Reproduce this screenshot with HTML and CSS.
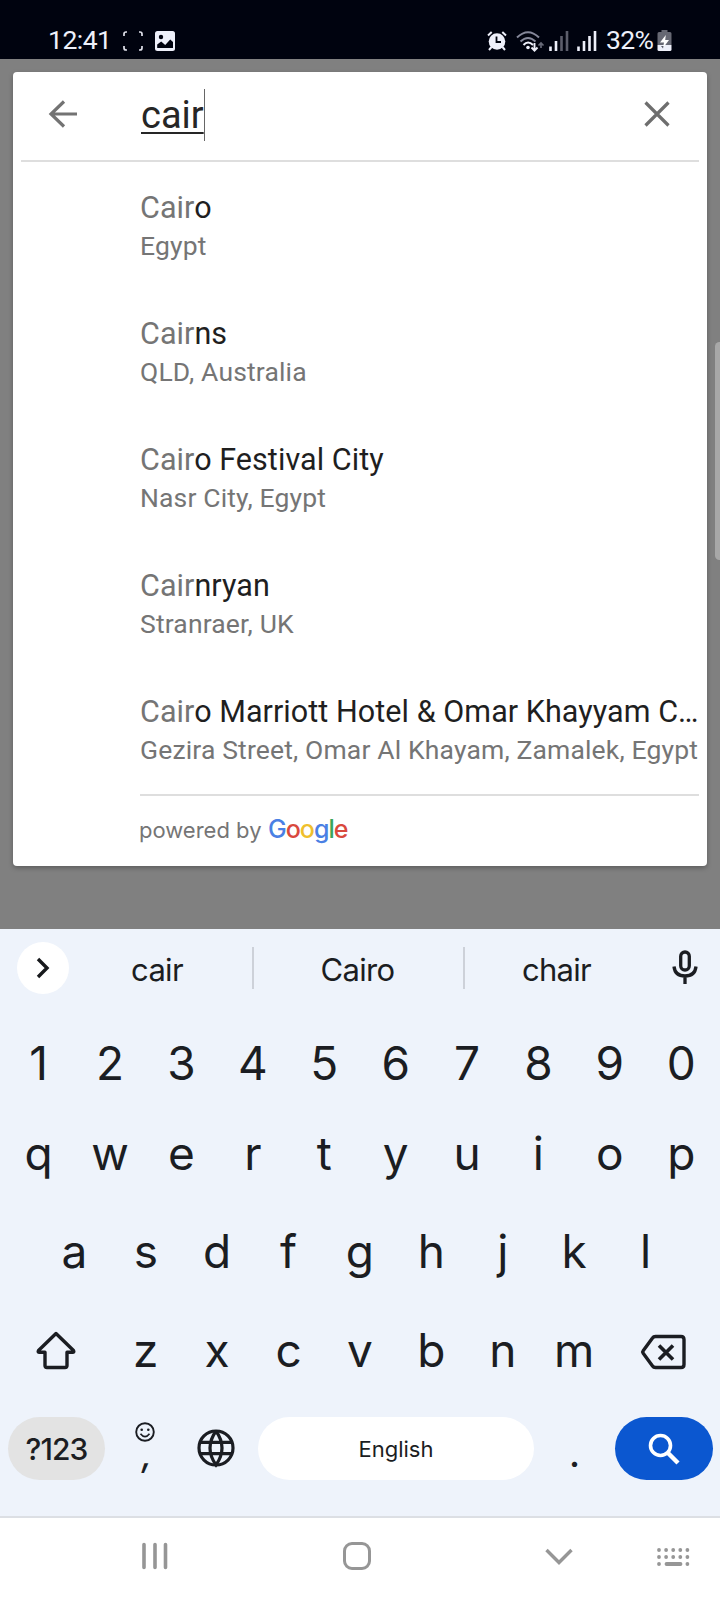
FILE: index.html
```html
<!DOCTYPE html>
<html lang="en">
<head>
<meta charset="utf-8">
<title>Place search</title>
<link rel="stylesheet" href="styles.css">
</head>
<body>
<div class="phone">
  <header class="status">
    <span class="time">12:41</span>
    <svg class="ic-capture" width="20" height="20" viewBox="0 0 20 20"><path d="M1 5V3q0-2 2-2h1M16 1h1q2 0 2 2v2M19 15v2q0 2-2 2h-1M4 19H3q-2 0-2-2v-2" fill="none" stroke="#dfe1ea" stroke-width="1.7"/></svg>
    <svg class="ic-picture" width="20" height="20" viewBox="0 0 20 20"><rect width="20" height="20" rx="2.5" fill="#eef0fa"/><circle cx="6" cy="6" r="2.2" fill="#00030f"/><path d="M2.2 17v-3.500l4-3 4 3.400 5-5.500 2.800 2.600v6z" fill="#00030f"/></svg>
    <svg class="ic-alarm" width="20" height="20" viewBox="0 0 20 20"><circle cx="10" cy="10.500" r="8.300" fill="#eef0fa"/><path d="M1 4.500 4.700 1M19 4.500 15.300 1M4.500 16 2 19M15.500 16l2.500 3" stroke="#eef0fa" stroke-width="2"/><path d="M9.500 5.500v5.500h4.500" fill="none" stroke="#00030f" stroke-width="1.800"/></svg>
    <svg class="ic-wifi" width="28" height="22" viewBox="0 0 28 22"><g fill="none" stroke-width="2"><path d="M1 6.500Q12 -4 23 6.500" stroke="#85889a"/><path d="M4.500 10.500Q12 3.500 19.500 10.500" stroke="#85889a"/><path d="M7.500 14Q12 9 17 14" stroke="#eef0fa"/></g><circle cx="12" cy="16.500" r="1.800" fill="#eef0fa"/><path d="M18.500 12v7M15.500 16.500l3 3.200 3-3.200" fill="none" stroke="#eef0fa" stroke-width="1.900"/><path d="M25 17v-4.500M22.500 14.500l2.500-2.500 2.500 2.500" fill="none" stroke="#666977" stroke-width="1.700"/></svg>
    <svg class="ic-signal" width="20" height="20" viewBox="0 0 20 20"><path d="M1.500 15.500V20M7 10v10" stroke="#eef0fa" stroke-width="2.600"/><path d="M12.500 5v15M18 0v20" stroke="#5c5e6b" stroke-width="2.600"/></svg>
    <svg class="ic-signal" width="20" height="20" viewBox="0 0 20 20"><path d="M1.500 15.500V20M7 10v10M12.500 5v15M18 0v20" stroke="#eef0fa" stroke-width="2.600"/></svg>
    <span class="percent">32%</span>
    <svg class="ic-battery" width="15" height="22" viewBox="0 0 15 22"><path d="M4.500 0h6v2H13q1.500 0 1.500 1.500V15H.5V3.500Q.5 2 2 2h2.500z" fill="#666873"/><path d="M.5 15h14v4.500q0 1.500-1.500 1.500H2Q.5 21 .5 19.500z" fill="#eef0fa"/><path d="M8.800 5 3 12.500h4L6 18l6-8H8.200z" fill="#fff"/><path d="M4 16h2.500L6 18.500z" fill="#555866"/></svg>
  </header>

  <main class="backdrop">
    <section class="card">
      <div class="search">
        <svg class="back" width="30" height="28" viewBox="0 0 30 28"><path d="M15 1.500 2 14l13 12.500M2 14h26" fill="none" stroke="#737373" stroke-width="3.200"/></svg>
        <div class="query"><span>cair</span></div>
        <svg class="clear" width="26" height="26" viewBox="0 0 26 26"><path d="M1.500 1.500l23 23M24.500 1.500l-23 23" stroke="#6e6e6e" stroke-width="3.200"/></svg>
      </div>
      <ul class="results">
        <li><p class="place"><b>Cair</b>o</p><p class="region">Egypt</p></li>
        <li><p class="place"><b>Cair</b>ns</p><p class="region">QLD, Australia</p></li>
        <li><p class="place"><b>Cair</b>o Festival City</p><p class="region">Nasr City, Egypt</p></li>
        <li><p class="place"><b>Cair</b>nryan</p><p class="region">Stranraer, UK</p></li>
        <li><p class="place"><b>Cair</b>o Marriott Hotel &amp; Omar Khayyam C…</p><p class="region">Gezira Street, Omar Al Khayam, Zamalek, Egypt</p></li>
      </ul>
      <div class="credit"><span class="by">powered by</span><span class="brand"><i class="bl">G</i><i class="re">o</i><i class="ye">o</i><i class="bl">g</i><i class="gr">l</i><i class="re">e</i></span></div>
    </section>
    <div class="scroll-thumb"></div>
  </main>

  <section class="keyboard">
    <div class="suggest">
      <span class="expand"><svg width="14" height="22" viewBox="0 0 14 22"><path d="M2 2l9 9-9 9" fill="none" stroke="#17191c" stroke-width="3.400"/></svg></span>
      <span class="word first">cair</span><span class="bar"></span>
      <span class="word">Cairo</span><span class="bar"></span>
      <span class="word last">chair</span>
      <svg class="mic" width="26" height="34" viewBox="0 0 26 34"><g fill="none" stroke="#1b1d22" stroke-width="3.300"><rect x="8.700" y="1" width="8.600" height="18" rx="4.300"/><path d="M2 15.500Q3 25 13 25t11-9.500M13 25v8"/></g></svg>
    </div>
    <div class="row digits"><kbd>1</kbd><kbd>2</kbd><kbd>3</kbd><kbd>4</kbd><kbd>5</kbd><kbd>6</kbd><kbd>7</kbd><kbd>8</kbd><kbd>9</kbd><kbd>0</kbd></div>
    <div class="row top"><kbd>q</kbd><kbd>w</kbd><kbd>e</kbd><kbd>r</kbd><kbd>t</kbd><kbd>y</kbd><kbd>u</kbd><kbd>i</kbd><kbd>o</kbd><kbd>p</kbd></div>
    <div class="row home"><kbd>a</kbd><kbd>s</kbd><kbd>d</kbd><kbd>f</kbd><kbd>g</kbd><kbd>h</kbd><kbd>j</kbd><kbd>k</kbd><kbd>l</kbd></div>
    <div class="row low">
      <span class="wide"><svg class="shift" width="40" height="40" viewBox="0 0 40 40"><path d="M20 2.500 37.500 19.500q1 1.800-1 1.800h-5.500V34.500q0 2-2 2H11q-2 0-2-2V21.300H3.500q-2 0-1-1.800z" fill="none" stroke="#1b1d22" stroke-width="3.400" stroke-linejoin="round"/></svg></span>
      <kbd>z</kbd><kbd>x</kbd><kbd>c</kbd><kbd>v</kbd><kbd>b</kbd><kbd>n</kbd><kbd>m</kbd>
      <span class="wide"><svg class="erase" width="46" height="36" viewBox="0 0 46 36"><path d="M15.500 2.500H41q3 0 3 3v25q0 3-3 3H15.500q-2 0-3-1.500L3 19q-.8-1 0-2L12.500 4q1-1.500 3-1.500z" fill="none" stroke="#1b1d22" stroke-width="3.400"/><path d="M19 11.500 33 25.500M33 11.500 19 25.500" stroke="#1b1d22" stroke-width="3.600"/></svg></span>
    </div>
    <div class="actions">
      <span class="symbols">?123</span>
      <span class="comma"><svg width="20" height="20" viewBox="0 0 20 20"><circle cx="10" cy="10" r="8.800" fill="none" stroke="#1b1d22" stroke-width="1.900"/><circle cx="6.700" cy="7.700" r="1.300" fill="#1b1d22"/><circle cx="13.300" cy="7.700" r="1.300" fill="#1b1d22"/><path d="M5.500 11.700Q10 17.500 14.500 11.700" fill="none" stroke="#1b1d22" stroke-width="1.700"/></svg><em>,</em></span>
      <svg class="globe" width="38" height="38" viewBox="0 0 38 38"><g fill="none" stroke="#1b1d22" stroke-width="3.200"><circle cx="19" cy="19" r="17"/><path d="M19 2Q7 19 19 36Q31 19 19 2M3.500 13.300h31M3.500 24.700h31"/></g></svg>
      <span class="space">English</span>
      <span class="dot">.</span>
      <span class="go"><svg width="32" height="32" viewBox="0 0 32 32"><circle cx="12.500" cy="12.500" r="10" fill="none" stroke="#fff" stroke-width="3.600"/><path d="M19.500 19.500 30 30" stroke="#fff" stroke-width="4.400"/></svg></span>
    </div>
  </section>

  <nav class="nav">
    <svg width="26" height="28" viewBox="0 0 26 28"><path d="M2 2.500v23M13 2.500v23M23.500 2.500v23" stroke="#969696" stroke-width="3.600" stroke-linecap="round"/></svg>
    <svg width="28" height="28" viewBox="0 0 28 28"><rect x="1.500" y="1.500" width="25" height="25" rx="7.500" fill="none" stroke="#969696" stroke-width="3"/></svg>
    <svg width="28" height="18" viewBox="0 0 28 18"><path d="M1.500 3 14 15.500 26.500 3" fill="none" stroke="#969696" stroke-width="3.400"/></svg>
    <svg width="34" height="20" viewBox="0 0 34 20"><g fill="none" stroke="#969696" stroke-width="3.800" stroke-linecap="round"><path d="M3 4h29" stroke-dasharray="0 7.100"/><path d="M3 11h29" stroke-dasharray="0 7.100"/><path d="M3 18h0M10.500 18h14M31.400 18h0"/></g></svg>
  </nav>
</div>
</body>
</html>
```
FILE: styles.css
```css
* { box-sizing: border-box; }
body { margin: 0; }
svg { display: block; flex: none; overflow: visible; }
.phone {
  width: 720px;
  height: 1600px;
  display: flex;
  flex-direction: column;
  overflow: hidden;
  background: #fff;
  font-family: Roboto, "Liberation Sans", sans-serif;
}

.status {
  height: 59px;
  flex: none;
  display: flex;
  align-items: flex-start;
  padding: 30px 0 0 48px;
  background: #00030f;
  color: #eef0fa;
  font-size: 26.500px;
  line-height: 20px;
}
.time { width: 75px; letter-spacing: -0.5px; }
.ic-picture { margin-left: 12px; }
.ic-alarm { margin-left: 312px; }
.ic-wifi { margin-left: 9px; }
.ic-signal { margin-left: 5px; }
.ic-signal + .ic-signal { margin-left: 8px; }
.percent { margin-left: 9px; width: 51px; letter-spacing: -0.7px; }
.status svg { margin-top: 1px; }
.status .ic-battery { margin-top: 0; }

.backdrop {
  position: relative;
  height: 870px;
  flex: none;
  padding: 13px 13.500px 0 13px;
  background: #808080;
}
.card {
  height: 794px;
  border-radius: 4px;
  background: #fff;
  box-shadow: 0 2px 5px rgba(0, 0, 0, 0.28);
  padding: 0 8px;
}
.scroll-thumb {
  position: absolute;
  top: 283px;
  right: -4px;
  width: 9px;
  height: 218px;
  border-radius: 5px;
  background: #a8a8a8;
}
.search {
  height: 90px;
  display: flex;
  align-items: center;
  border-bottom: 2px solid #dedede;
  padding: 0 29px 4px 28px;
}
.query { flex: 1; margin-left: 62px; padding-top: 2px; display: flex; }
.query span {
  font-size: 38px;
  line-height: 52px;
  height: 52px;
  color: #262626;
  border-right: 1px solid #666;
  text-decoration: underline;
  text-decoration-thickness: 2px;
  text-underline-offset: 4px;
  text-decoration-skip-ink: none;
}
.results {
  list-style: none;
  margin: 0 0 0 119px;
  padding: 2px 0 0;
  border-bottom: 2px solid #dedede;
}
.results li { height: 126px; padding-top: 25px; }
.results p { margin: 0; line-height: 38px; white-space: nowrap; }
.place { font-size: 30.500px; letter-spacing: 0.060px; color: #1f1f1f; }
.place b { font-weight: 400; color: #757575; }
.region { font-size: 26.500px; letter-spacing: 0.150px; color: #757575; }
.credit {
  height: 66px;
  margin-left: 118px;
  display: flex;
  align-items: baseline;
  font-family: Inter, sans-serif;
  font-size: 22px;
  line-height: 66px;
  color: #757575;
}
.by { width: 129px; }
.brand { font-size: 25px; font-weight: 500; letter-spacing: -1px; }
.brand i { font-style: normal; }
.bl { color: #4a80e4; }
.re { color: #d9493d; }
.ye { color: #efbf2d; }
.gr { color: #3ba55a; }

.keyboard {
  height: 587px;
  flex: none;
  background: #eef3fb;
  color: #1b1d22;
  font-family: Inter, sans-serif;
}
.suggest {
  height: 89px;
  display: flex;
  align-items: center;
  padding: 0 22px 12px 17px;
  font-size: 31px;
  letter-spacing: -0.7px;
}
.expand {
  width: 52px;
  height: 52px;
  border-radius: 50%;
  background: #fff;
  display: grid;
  place-items: center;
}
.word { width: 209px; text-align: center; padding: 3px 2px 0 0; }
.word.first { width: 183px; padding-right: 7px; }
.word.last { width: 207px; padding-right: 24px; }
.bar { width: 2px; height: 42px; background: #cdd1d9; }
.mic { margin-left: auto; }
.row { display: flex; align-items: center; padding: 0 3px; font-size: 46px; }
.row kbd { font-family: inherit; width: 71.400px; text-align: center; }
.digits { height: 90px; }
.top { height: 89px; }
.home { height: 107px; padding: 0 38.700px; }
.low { height: 90px; padding-top: 2px; }
.wide { width: 107.100px; display: grid; place-items: center; }
.shift { margin: 2px 2px 0 0; }
.erase { margin-top: 3px; }
.actions {
  height: 109px;
  display: flex;
  padding: 23px 7px 0 8px;
}
.symbols {
  width: 97px;
  height: 63px;
  border-radius: 32px;
  background: #e3e3e3;
  font-size: 30px;
  font-weight: 500;
  line-height: 65px;
  text-align: center;
  letter-spacing: -0.9px;
}
.comma {
  width: 80px;
  display: flex;
  flex-direction: column;
  align-items: center;
  padding-top: 5px;
}
.comma em { font-size: 34px; font-weight: 500; line-height: 25px; padding-left: 4px; }
.globe { margin: 12px 23px 0 12px; }
.space {
  width: 276px;
  height: 63px;
  border-radius: 32px;
  background: #fff;
  font-size: 22px;
  line-height: 65px;
  text-align: center;
}
.dot { width: 81px; text-align: center; font-size: 40px; line-height: 72px; }
.go {
  width: 98px;
  height: 63px;
  border-radius: 32px;
  background: #0b57d0;
  display: grid;
  place-items: center;
}

.nav {
  height: 84px;
  border-top: 2px solid #dcdfe4;
  display: flex;
  align-items: center;
  padding: 0 30px 6px 142px;
}
.nav svg:nth-child(2) { margin-left: 175px; }
.nav svg:nth-child(3) { margin-left: 174px; }
.nav svg:nth-child(4) { margin-left: auto; }
```
